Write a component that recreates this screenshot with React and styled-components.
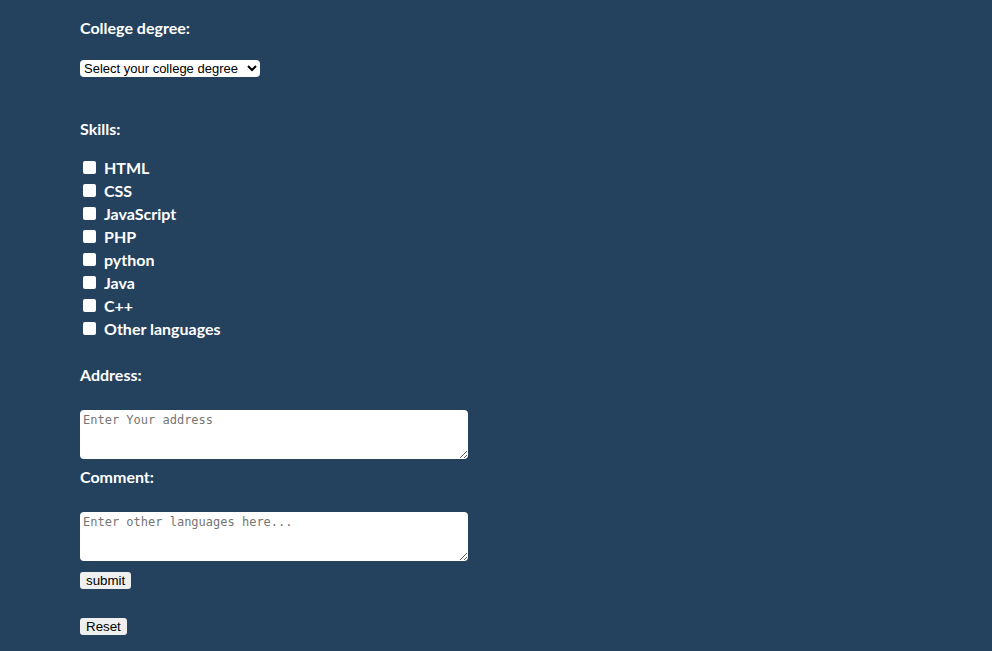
import React from "react";
import styled, { createGlobalStyle } from "styled-components";

const Global = createGlobalStyle`
  html, body { margin: 0; padding: 0; background: #24425e; }
  body { min-height: 651px; }
`;

const Page = styled.form`
  display: flex;
  flex-direction: column;
  align-items: flex-start;
  padding: 16px 0 0 80px;
  font-family: "Comic Sans MS", "Lato", sans-serif;
  color: #ffffff;
`;

const Label = styled.label`
  font-size: 16px;
  font-weight: 700;
  line-height: 23px;
  margin-top: ${(p) => p.$mt || 0}px;
`;

const Select = styled.select`
  margin-top: ${(p) => p.$mt || 0}px;
  width: 180px;
  height: 17px;
  font-family: "Liberation Sans", Arial, sans-serif;
  font-size: 13px;
  color: #000;
  background: #fff;
  border: none;
  border-radius: 4px;
  padding: 0;
`;

const List = styled.div`
  display: flex;
  flex-direction: column;
  margin-top: ${(p) => p.$mt || 0}px;
`;

const Row = styled.label`
  display: flex;
  align-items: center;
  gap: 8px;
  height: 23px;
  padding-left: 3px;
  font-size: 16px;
  font-weight: 700;
`;

const Box = styled.input`
  appearance: none;
  margin: 0;
  width: 13px;
  height: 13px;
  background: #fff;
  border-radius: 2px;
`;

const Area = styled.textarea`
  margin-top: ${(p) => p.$mt || 0}px;
  box-sizing: border-box;
  width: 388px;
  height: 49px;
  border: none;
  border-radius: 4px;
  background: #fff;
  padding: 3px 3px;
  font-family: "DejaVu Sans Mono", monospace;
  font-size: 12px;
  &::placeholder { color: #757575; }
`;

const Button = styled.button`
  margin-top: ${(p) => p.$mt || 0}px;
  height: 17px;
  padding: 0 6px;
  border: none;
  border-radius: 3px;
  background: #efefef;
  color: #000;
  font-family: "Liberation Sans", Arial, sans-serif;
  font-size: 13.33px;
  line-height: 17px;
`;

const skills = ["HTML", "CSS", "JavaScript", "PHP", "python", "Java", "C++", "Other languages"];

export default function App() {
  return (
    <>
      <Global />
      <Page onSubmit={(e) => e.preventDefault()}>
        <Label>College degree:</Label>
        <Select $mt={21} defaultValue="">
          <option value="">Select your college degree</option>
        </Select>
        <Label $mt={40}>Skills:</Label>
        <List $mt={16}>
          {skills.map((s) => (
            <Row key={s}>
              <Box type="checkbox" />
              {s}
            </Row>
          ))}
        </List>
        <Label $mt={23}>Address:</Label>
        <Area $mt={24} placeholder="Enter Your address" />
        <Label $mt={6}>Comment:</Label>
        <Area $mt={24} placeholder="Enter other languages here..." />
        <Button $mt={11} type="submit">submit</Button>
        <Button $mt={29} type="reset">Reset</Button>
      </Page>
    </>
  );
}
